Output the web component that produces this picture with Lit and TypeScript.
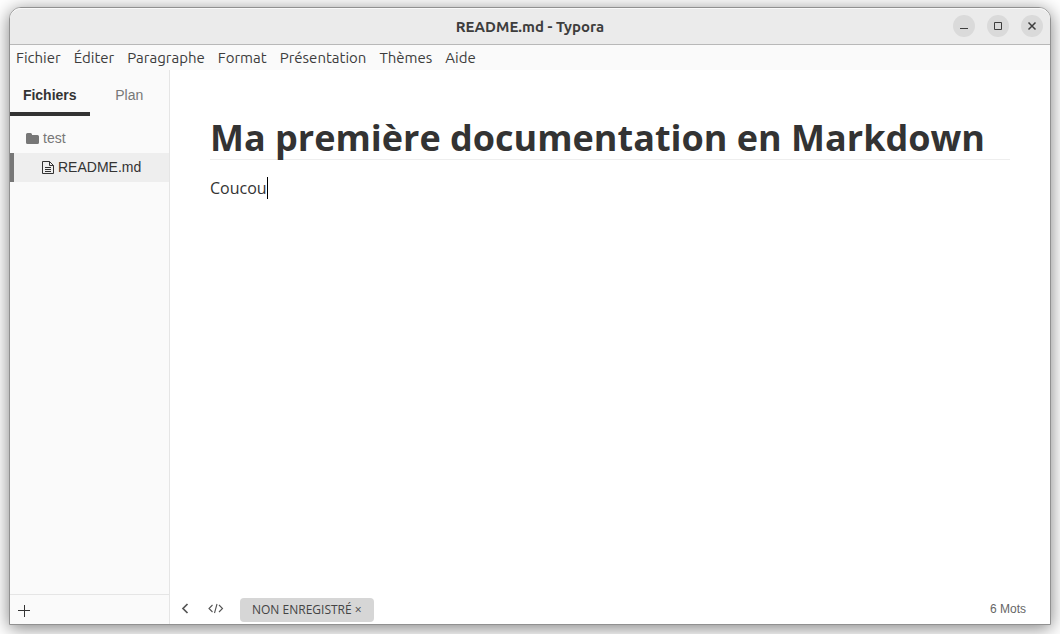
import { LitElement, html, css, svg } from "lit";
import { customElement, property, state } from "lit/decorators.js";
import { classMap } from "lit/directives/class-map.js";

const icons = {
  minimize: svg`<path d="M4 10.5h8" />`,
  maximize: svg`<path d="M4.5 4.5h7v7h-7z" />`,
  close: svg`<path d="M4.5 4.5l7 7M11.5 4.5l-7 7" stroke-width="1.5" />`,
};

@customElement("title-bar")
export class TitleBar extends LitElement {
  @property() heading = "";

  static styles = css`
    .bar {
      display: grid;
      grid-template-columns: 1fr auto 1fr;
      align-items: center;
      height: 34px;
      padding-bottom: 1px;
      background: #ebebeb;
      border-top: 1px solid #f9f9f9;
      border-bottom: 1px solid #b8b8b8;
      border-radius: 11px 11px 0 0;
      box-sizing: content-box;
      color: #3d3d3d;
    }
    .title {
      grid-column: 2;
      margin: 0;
      padding-top: 2px;
      font: bold 15px/20px Ubuntu, "Noto Sans", sans-serif;
    }
    .controls {
      display: flex;
      justify-content: flex-end;
      gap: 12px;
      padding-right: 7px;
    }
    .control {
      width: 22px;
      height: 22px;
      padding: 3px;
      border: 0;
      border-radius: 50%;
      background: #dadada;
      color: #3d3d3d;
    }
    .control svg {
      display: block;
      width: 16px;
      height: 16px;
      fill: none;
      stroke: currentColor;
    }
  `;

  render() {
    return html`<header class="bar">
      <h1 class="title">${this.heading}</h1>
      <div class="controls">
        <button class="control" aria-label="Réduire"><svg viewBox="0 0 16 16">${icons.minimize}</svg></button>
        <button class="control" aria-label="Agrandir"><svg viewBox="0 0 16 16">${icons.maximize}</svg></button>
        <button class="control" aria-label="Fermer"><svg viewBox="0 0 16 16">${icons.close}</svg></button>
      </div>
    </header>`;
  }
}

@customElement("menu-bar")
export class MenuBar extends LitElement {
  @property({ attribute: false }) items: string[] = [];

  static styles = css`
    .menu {
      display: flex;
      gap: 13px;
      height: 25px;
      padding: 0 6px;
      background: #fafafa;
    }
    .item {
      padding: 0;
      border: 0;
      background: none;
      color: #3d3d3d;
      font: 15px/25px Ubuntu, "Noto Sans", sans-serif;
    }
  `;

  render() {
    return html`<nav class="menu">
      ${this.items.map((item) => html`<button class="item">${item}</button>`)}
    </nav>`;
  }
}

@customElement("side-bar")
export class SideBar extends LitElement {
  @state() private tab = "Fichiers";

  static styles = css`
    :host {
      display: flex;
      flex-direction: column;
      box-sizing: border-box;
      background: #fafafa;
      border-right: 1px solid #e5e5e5;
      font-family: "Liberation Sans", Arial, sans-serif;
    }
    button {
      border: 0;
      background: none;
      font-family: inherit;
    }
    .tabs {
      display: grid;
      grid-template-columns: 1fr 1fr;
    }
    .tab {
      height: 46px;
      padding: 8px 0 0;
      border-bottom: 4px solid transparent;
      color: #777;
      font-size: 14px;
      line-height: 34px;
    }
    .tab.active {
      border-color: #333;
      color: #333;
      font-weight: bold;
    }
    .tree {
      flex: 1;
      padding-top: 8px;
    }
    .row {
      display: flex;
      align-items: center;
      box-sizing: border-box;
      width: 100%;
      height: 29px;
      padding: 0 0 2px 15px;
      border-left: 0 solid #777;
      color: #777;
      font-size: 14px;
      line-height: 20px;
    }
    .row svg {
      width: 15px;
      height: 16px;
      margin-right: 3px;
    }
    .row.file {
      padding-left: 26px;
      border-left-width: 4px;
      background: #eee;
      color: #333;
    }
    .foot {
      display: flex;
      align-items: center;
      height: 29px;
      border-top: 1px solid #e5e5e5;
    }
    .add {
      padding: 2px 7px 0;
      color: #333;
    }
    .add svg {
      display: block;
      width: 14px;
      height: 14px;
    }
  `;

  render() {
    return html`
      <div class="tabs" role="tablist">
        ${["Fichiers", "Plan"].map(
          (name) => html`<button
            role="tab"
            aria-selected=${this.tab === name}
            class=${classMap({ tab: true, active: this.tab === name })}
            @click=${() => (this.tab = name)}
          >${name}</button>`
        )}
      </div>
      <div class="tree">
        <button class="row">
          <svg viewBox="0 0 15 16" fill="currentColor">
            <path d="M1 4.500Q1 3 2.500 3H5.500Q7 3 7 4.500V5H12.500Q14 5 14 6.500V12.500Q14 14 12.500 14H2.500Q1 14 1 12.500Z" />
          </svg>
          test
        </button>
        <button class="row file">
          <svg viewBox="0 0 15 16" fill="none" stroke="currentColor">
            <path d="M2.500 2.500H9.500L13.500 6.500V14.500H2.500ZM9.500 2.500V6.500H13.500M5 8.500H11M5 10.500H11M5 12.500H11" />
          </svg>
          README.md
        </button>
      </div>
      <div class="foot">
        <button class="add" aria-label="Nouveau fichier">
          <svg viewBox="0 0 14 14" fill="none" stroke="currentColor"><path d="M7.500 1v12M1 6.500h12" /></svg>
        </button>
      </div>
    `;
  }
}

@customElement("status-bar")
export class StatusBar extends LitElement {
  static styles = css`
    .status {
      display: flex;
      align-items: center;
      height: 30px;
      padding: 0 24px 0 8px;
      color: #555;
    }
    .icon {
      padding: 0;
      margin-right: 16px;
      border: 0;
      background: none;
      color: inherit;
    }
    .icon svg {
      display: block;
      height: 14px;
      fill: none;
      stroke: currentColor;
    }
    .unsaved {
      height: 24px;
      margin-top: 2px;
      padding: 0 12px;
      border: 0;
      border-radius: 4px;
      background: #d6d6d6;
      color: #444;
      font: 12px/24px "Open Sans", sans-serif;
    }
    .count {
      margin-left: auto;
      font: 12px/16px "Liberation Sans", Arial, sans-serif;
      color: #666;
    }
  `;

  render() {
    return html`<footer class="status">
      <button class="icon" aria-label="Masquer le panneau">
        <svg viewBox="0 0 14 14" width="14"><path d="M9.500 2L5 6.500l4.500 4.500" stroke-width="1.700" /></svg>
      </button>
      <button class="icon" aria-label="Code source">
        <svg viewBox="0 0 16 14" width="16"><path d="M4.500 3L1 6.500L4.500 10M11 3L14.500 6.500L11 10M9 2L6.500 11" stroke-width="1.100" /></svg>
      </button>
      <button class="unsaved">NON ENREGISTRÉ ×</button>
      <span class="count">6 Mots</span>
    </footer>`;
  }
}

@customElement("app-root")
export class AppRoot extends LitElement {
  static styles = css`
    :host {
      display: block;
      box-sizing: border-box;
      height: 100vh;
      padding: 7px 9px 9px;
      overflow: hidden;
      background: #fff;
    }
    .window {
      display: flex;
      flex-direction: column;
      box-sizing: border-box;
      height: 100%;
      border: 1px solid #919191;
      border-radius: 12px 12px 0 0;
      background: #fff;
      box-shadow: 0 3px 18px rgba(0, 0, 0, 0.5);
    }
    .body {
      display: grid;
      grid-template-columns: 160px 1fr;
      flex: 1;
      min-height: 0;
    }
    .main {
      display: flex;
      flex-direction: column;
      min-width: 0;
    }
    .editor {
      flex: 1;
      padding: 46px 40px 0;
      outline: none;
      color: #333;
      font: 16px/24px "Open Sans", sans-serif;
    }
    .heading {
      margin: 0 0 16px;
      border-bottom: 1px solid #eee;
      font-size: 36px;
      line-height: 43px;
    }
    .text {
      display: flex;
      align-items: center;
      margin: 0;
    }
    .caret {
      width: 1px;
      height: 22px;
      background: #000;
    }
  `;

  private menu = ["Fichier", "Éditer", "Paragraphe", "Format", "Présentation", "Thèmes", "Aide"];

  render() {
    return html`<div class="window">
      <title-bar heading="README.md - Typora"></title-bar>
      <menu-bar .items=${this.menu}></menu-bar>
      <div class="body">
        <side-bar></side-bar>
        <main class="main">
          <article class="editor">
            <h1 class="heading">Ma première documentation en Markdown</h1>
            <p class="text">Coucou<span class="caret"></span></p>
          </article>
          <status-bar></status-bar>
        </main>
      </div>
    </div>`;
  }
}
